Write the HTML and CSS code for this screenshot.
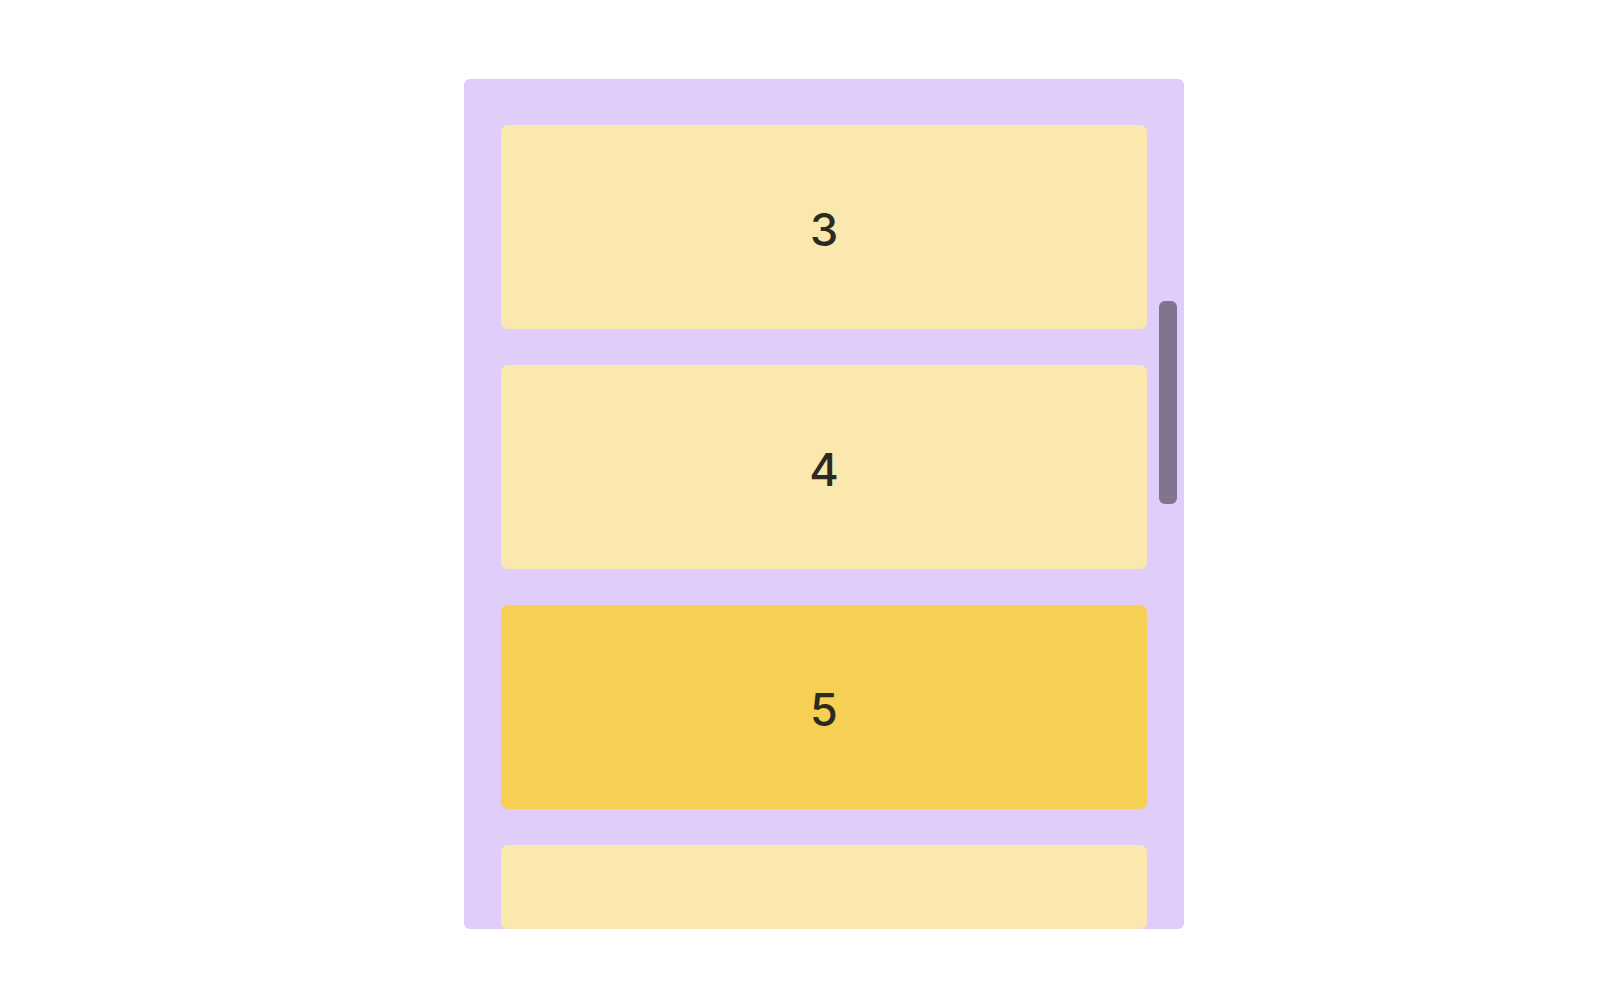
FILE: index.html
```html
<!DOCTYPE html>
<html lang="en">
<head>
<meta charset="utf-8">
<title>Scroll list</title>
<link rel="stylesheet" href="styles.css">
</head>
<body>
<div class="page">
  <div class="scroller">
    <div class="list">
      <div class="card">3</div>
      <div class="card">4</div>
      <div class="card card-active">5</div>
      <div class="card card-last"></div>
    </div>
    <div class="thumb"></div>
  </div>
</div>
</body>
</html>
```
FILE: styles.css
```css
html, body {
  margin: 0;
  padding: 0;
  background: #ffffff;
}
body {
  font-family: Inter, "Noto Sans", sans-serif;
  width: 1620px;
  height: 994px;
  overflow: hidden;
}
.page {
  display: flex;
  padding-top: 79px;
  padding-left: 464px;
}
.scroller {
  position: relative;
  width: 720px;
  height: 850px;
  background: #e0cdf9;
  border-radius: 6px;
  overflow: hidden;
}
.list {
  display: flex;
  flex-direction: column;
  gap: 36px;
  padding: 46px 37px 0 37px;
}
.card {
  height: 204px;
  flex: none;
  box-sizing: border-box;
  padding-top: 5px;
  background: #fae8ae;
  border-radius: 7px;
  display: flex;
  align-items: center;
  justify-content: center;
  font-size: 45px;
  font-weight: 500;
  color: #2d2a20;
  line-height: 1;
}
.card-active {
  background: #f6d052;
}
.card-last {
  height: 84px;
}
.thumb {
  position: absolute;
  left: 695px;
  top: 222px;
  width: 18px;
  height: 203px;
  background: #80748f;
  border-radius: 6px;
}
```
